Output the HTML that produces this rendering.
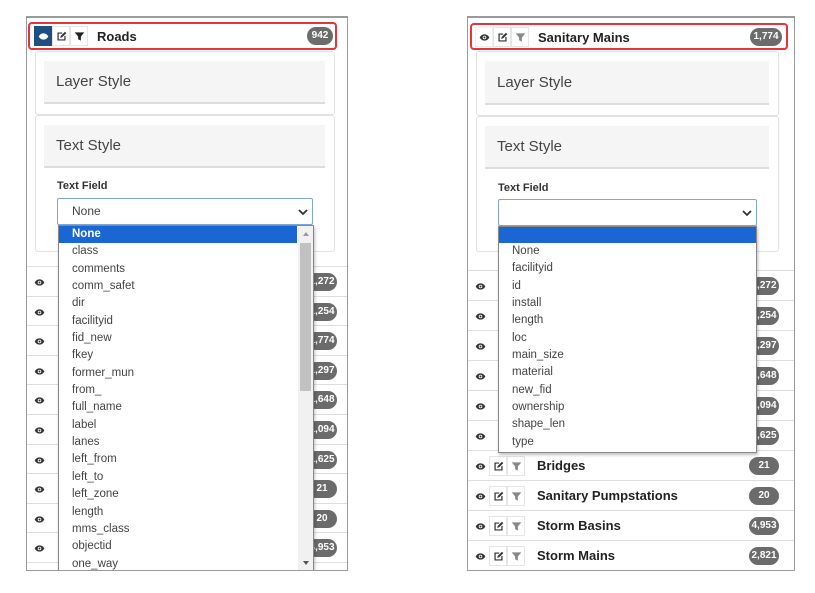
<!DOCTYPE html>
<html><head><meta charset="utf-8"><style>
*{box-sizing:border-box;margin:0;padding:0}
body{width:815px;height:593px;background:#fff;position:relative;overflow:hidden;font-family:"Liberation Sans",sans-serif;color:#333}
.abs{position:absolute}
.panel{position:absolute;border:1px solid #9a9a9a;border-top:2px solid #9a9a9a;background:#fff;overflow:hidden}
.hdr{position:absolute;border:2px solid #e8323c;border-radius:4px;background:#fff}
.btn{position:absolute;top:2px;width:18px;height:20px;border:1px solid #e6e6e6;background:#fff;display:flex;align-items:center;justify-content:center}
.btn svg{width:11px;height:11px}
.title{position:absolute;font-size:13px;font-weight:bold;color:#222}
.badge{position:absolute;height:18px;border-radius:9px;background:#6b6b6b;color:#fff;font-size:10px;font-weight:bold;line-height:18px;text-align:center}
.box{position:absolute;border:1px solid #e2e2e2;border-radius:3px;background:#fff}
.sec{position:absolute;background:#f5f5f5;border-bottom:2px solid #ddd;font-size:15px;color:#444;padding-left:12px}
.lbl{position:absolute;font-size:11px;font-weight:bold;color:#333}
.sel{position:absolute;border:1px solid #7fa6d6;border-radius:2px;background:#fff;font-size:12px;color:#444}
.dd{position:absolute;border:1px solid #888;background:#fff;font-size:11.5px;color:#444;box-shadow:1px 2px 3px rgba(0,0,0,.25)}
.dd div{height:17.35px;line-height:17.35px;padding-left:13px}
.dd .hl{background:#1a66d2;color:#fff;font-weight:bold}
.row{position:absolute;border-top:1px solid #ddd;height:30px}
.row .btn{top:5px}
.row .btn.e{border-color:transparent}
.row .title{top:7px}
</style></head><body>
<svg width="0" height="0" style="position:absolute">
<symbol id="eye" viewBox="0 0 16 16"><path d="M1 8C3 4.5 5.5 3.5 8 3.5S13 4.5 15 8C13 11.5 10.5 12.5 8 12.5S3 11.5 1 8Z" fill="currentColor"/><circle cx="8" cy="8" r="2.6" fill="#fff"/><circle cx="8" cy="8" r="1.4" fill="currentColor"/></symbol>
<symbol id="ed" viewBox="0 0 16 16"><path d="M9 3H3v10h10V7" fill="none" stroke="currentColor" stroke-width="1.8"/><path d="M6 10l1-3 6-6 2 2-6 6z" fill="currentColor"/></symbol>
<symbol id="fl" viewBox="0 0 16 16"><path d="M1 2h14l-5 6v6l-4-2V8z" fill="currentColor"/></symbol>
</svg>

<div class="panel" style="left:26px;top:16px;width:322px;height:555px">
 <div class="hdr" style="left:1px;top:4px;width:309px;height:28px">
  <div class="btn" style="left:4px;background:#1d4f80;border-color:#1d4f80;color:#fff"><svg><use href="#eye"/></svg></div>
  <div class="btn" style="left:22px;color:#333"><svg><use href="#ed"/></svg></div>
  <div class="btn" style="left:40px;color:#222"><svg><use href="#fl"/></svg></div>
  <div class="title" style="left:67px;top:5px">Roads</div>
  <div class="badge" style="left:277px;top:3px;width:26px">942</div>
 </div>
 <div class="box" style="left:8px;top:33px;width:300px;height:64px"></div>
 <div class="sec" style="left:17px;top:43px;width:281px;height:43px;line-height:42px">Layer Style</div>
 <div class="box" style="left:8px;top:97px;width:300px;height:137px"></div>
 <div class="sec" style="left:17px;top:107px;width:281px;height:43px;line-height:42px">Text Style</div>
 <div class="lbl" style="left:30px;top:162px">Text Field</div>
 <div class="sel" style="left:30px;top:180px;width:256px;height:27px;line-height:25px;padding-left:14px">None<svg class="abs" style="right:4px;top:9px;width:10px;height:8px" viewBox="0 0 10 8"><path d="M1 2l4 4 4-4" fill="none" stroke="#333" stroke-width="1.8"/></svg></div>

 <div class="row" style="left:0;top:248px;width:320px"><div class="btn e" style="left:3px;color:#333"><svg><use href="#eye"/></svg></div><div class="badge" style="left:280px;top:6px;width:30px">1,272</div></div>
 <div class="row" style="left:0;top:278px;width:320px"><div class="btn e" style="left:3px;color:#333"><svg><use href="#eye"/></svg></div><div class="badge" style="left:280px;top:6px;width:30px">1,254</div></div>
 <div class="row" style="left:0;top:307px;width:320px"><div class="btn e" style="left:3px;color:#333"><svg><use href="#eye"/></svg></div><div class="badge" style="left:280px;top:6px;width:30px">1,774</div></div>
 <div class="row" style="left:0;top:337px;width:320px"><div class="btn e" style="left:3px;color:#333"><svg><use href="#eye"/></svg></div><div class="badge" style="left:280px;top:6px;width:30px">1,297</div></div>
 <div class="row" style="left:0;top:366px;width:320px"><div class="btn e" style="left:3px;color:#333"><svg><use href="#eye"/></svg></div><div class="badge" style="left:280px;top:6px;width:30px">1,648</div></div>
 <div class="row" style="left:0;top:396px;width:320px"><div class="btn e" style="left:3px;color:#333"><svg><use href="#eye"/></svg></div><div class="badge" style="left:280px;top:6px;width:30px">1,094</div></div>
 <div class="row" style="left:0;top:426px;width:320px"><div class="btn e" style="left:3px;color:#333"><svg><use href="#eye"/></svg></div><div class="badge" style="left:280px;top:6px;width:30px">1,625</div></div>
 <div class="row" style="left:0;top:455px;width:320px"><div class="btn e" style="left:3px;color:#333"><svg><use href="#eye"/></svg></div><div class="badge" style="left:280px;top:6px;width:30px">21</div></div>
 <div class="row" style="left:0;top:485px;width:320px"><div class="btn e" style="left:3px;color:#333"><svg><use href="#eye"/></svg></div><div class="badge" style="left:280px;top:6px;width:30px">20</div></div>
 <div class="row" style="left:0;top:514px;width:320px"><div class="btn e" style="left:3px;color:#333"><svg><use href="#eye"/></svg></div><div class="badge" style="left:280px;top:6px;width:30px">4,953</div></div>
 <div class="row" style="left:0;top:544px;width:320px"></div>

 <div class="dd" style="left:31px;top:207px;width:256px;height:347px">
  <div class="hl" style="margin-right:16px">None</div>
  <div>class</div><div>comments</div><div>comm_safet</div><div>dir</div><div>facilityid</div><div>fid_new</div><div>fkey</div><div>former_mun</div><div>from_</div><div>full_name</div><div>label</div><div>lanes</div><div>left_from</div><div>left_to</div><div>left_zone</div><div>length</div><div>mms_class</div><div>objectid</div><div>one_way</div>
  <span class="abs" style="right:0;top:0;width:15px;height:345px;background:#f1f1f1"></span>
  <span class="abs" style="right:2px;top:17px;width:11px;height:148px;background:#c1c1c1"></span>
  <span class="abs" style="right:4px;top:6px;border:3px solid transparent;border-bottom:4px solid #999;border-top:0"></span>
  <span class="abs" style="right:4px;bottom:6px;border:3px solid transparent;border-top:4px solid #555;border-bottom:0"></span>
 </div>
</div>

<div class="panel" style="left:467px;top:16px;width:328px;height:555px">
 <div class="hdr" style="left:2px;top:5px;width:318px;height:27px">
  <div class="btn" style="left:3px;border-color:#eee;color:#333"><svg><use href="#eye"/></svg></div>
  <div class="btn" style="left:21px;color:#333"><svg><use href="#ed"/></svg></div>
  <div class="btn" style="left:39px;color:#888"><svg><use href="#fl"/></svg></div>
  <div class="title" style="left:66px;top:5px">Sanitary Mains</div>
  <div class="badge" style="left:278px;top:3px;width:32px">1,774</div>
 </div>
 <div class="box" style="left:8px;top:33px;width:303px;height:65px"></div>
 <div class="sec" style="left:17px;top:43px;width:284px;height:44px;line-height:43px">Layer Style</div>
 <div class="box" style="left:8px;top:98px;width:303px;height:136px"></div>
 <div class="sec" style="left:17px;top:108px;width:284px;height:43px;line-height:42px">Text Style</div>
 <div class="lbl" style="left:30px;top:164px">Text Field</div>
 <div class="sel" style="left:30px;top:181px;width:259px;height:27px"><svg class="abs" style="right:4px;top:9px;width:10px;height:8px" viewBox="0 0 10 8"><path d="M1 2l4 4 4-4" fill="none" stroke="#333" stroke-width="1.8"/></svg></div>

 <div class="row" style="left:0;top:252px;width:326px"><div class="btn e" style="left:3px;color:#333"><svg><use href="#eye"/></svg></div><div class="badge" style="left:281px;top:6px;width:30px">1,272</div></div>
 <div class="row" style="left:0;top:282px;width:326px"><div class="btn e" style="left:3px;color:#333"><svg><use href="#eye"/></svg></div><div class="badge" style="left:281px;top:6px;width:30px">1,254</div></div>
 <div class="row" style="left:0;top:312px;width:326px"><div class="btn e" style="left:3px;color:#333"><svg><use href="#eye"/></svg></div><div class="badge" style="left:281px;top:6px;width:30px">1,297</div></div>
 <div class="row" style="left:0;top:342px;width:326px"><div class="btn e" style="left:3px;color:#333"><svg><use href="#eye"/></svg></div><div class="badge" style="left:281px;top:6px;width:30px">1,648</div></div>
 <div class="row" style="left:0;top:372px;width:326px"><div class="btn e" style="left:3px;color:#333"><svg><use href="#eye"/></svg></div><div class="badge" style="left:281px;top:6px;width:30px">1,094</div></div>
 <div class="row" style="left:0;top:402px;width:326px"><div class="btn e" style="left:3px;color:#333"><svg><use href="#eye"/></svg></div><div class="badge" style="left:281px;top:6px;width:30px">1,625</div></div>
 <div class="row" style="left:0;top:432px;width:326px"><div class="btn e" style="left:3px;color:#333"><svg><use href="#eye"/></svg></div><div class="btn" style="left:21px;color:#333"><svg><use href="#ed"/></svg></div><div class="btn" style="left:39px;color:#888"><svg><use href="#fl"/></svg></div><div class="title" style="left:69px">Bridges</div><div class="badge" style="left:281px;top:6px;width:30px">21</div></div>
 <div class="row" style="left:0;top:462px;width:326px"><div class="btn e" style="left:3px;color:#333"><svg><use href="#eye"/></svg></div><div class="btn" style="left:21px;color:#333"><svg><use href="#ed"/></svg></div><div class="btn" style="left:39px;color:#888"><svg><use href="#fl"/></svg></div><div class="title" style="left:69px">Sanitary Pumpstations</div><div class="badge" style="left:281px;top:6px;width:30px">20</div></div>
 <div class="row" style="left:0;top:492px;width:326px"><div class="btn e" style="left:3px;color:#333"><svg><use href="#eye"/></svg></div><div class="btn" style="left:21px;color:#333"><svg><use href="#ed"/></svg></div><div class="btn" style="left:39px;color:#888"><svg><use href="#fl"/></svg></div><div class="title" style="left:69px">Storm Basins</div><div class="badge" style="left:281px;top:6px;width:30px">4,953</div></div>
 <div class="row" style="left:0;top:522px;width:326px"><div class="btn e" style="left:3px;color:#333"><svg><use href="#eye"/></svg></div><div class="btn" style="left:21px;color:#333"><svg><use href="#ed"/></svg></div><div class="btn" style="left:39px;color:#888"><svg><use href="#fl"/></svg></div><div class="title" style="left:69px">Storm Mains</div><div class="badge" style="left:281px;top:6px;width:30px">2,821</div></div>

 <div class="dd" style="left:30px;top:208px;width:259px;height:227px">
  <div class="hl" style="height:16px"></div>
  <div>None</div><div>facilityid</div><div>id</div><div>install</div><div>length</div><div>loc</div><div>main_size</div><div>material</div><div>new_fid</div><div>ownership</div><div>shape_len</div><div>type</div>
 </div>
</div>
</body></html>
